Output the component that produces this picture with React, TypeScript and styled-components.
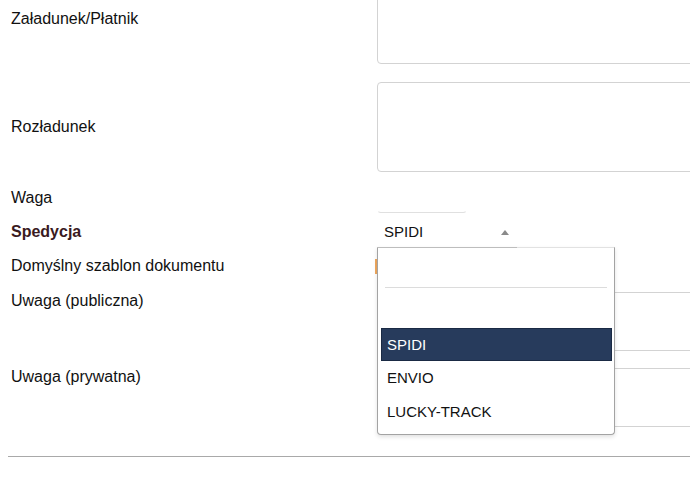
import styled, { createGlobalStyle } from 'styled-components';

const GlobalStyle = createGlobalStyle`
  html, body {
    margin: 0;
    padding: 0;
    background: #fff;
    overflow: hidden;
  }
  body {
    font-family: "Liberation Sans", Arial, sans-serif;
    color: #111;
  }
`;

// the form is scrolled a little, so the first textarea is cut at the top
const Page = styled.div`
  margin-top: -26px;
  padding-left: 8px;
`;

const Row = styled.div<{ $gap: number; $align?: 'center' | 'start' }>`
  display: grid;
  grid-template-columns: 369px 1fr;
  align-items: ${(p) => (p.$align === 'start' ? 'start' : 'center')};
  margin-top: ${(p) => p.$gap}px;
`;

const Label = styled.div<{ $strong?: boolean }>`
  padding-left: 3px;
  font-size: 16px;
  line-height: 18px;
  font-weight: ${(p) => (p.$strong ? 700 : 400)};
  color: ${(p) => (p.$strong ? '#3a1a1f' : '#111')};
`;

const TextArea = styled.textarea<{ $h: number }>`
  display: block;
  box-sizing: border-box;
  width: 340px;
  height: ${(p) => p.$h}px;
  margin: 0;
  border: 1px solid #d3d3d3;
  border-radius: 4px;
  resize: none;
  outline: none;
  font: inherit;
`;

const WeightInput = styled.input`
  display: block;
  box-sizing: border-box;
  width: 90px;
  height: 31px;
  margin: 0;
  border: 1px solid transparent;
  border-bottom-color: #e0e0e0;
  border-radius: 4px;
  outline: none;
  font: inherit;
`;

const SelectWrap = styled.div`
  position: relative;
  width: 140px;
`;

const SelectBox = styled.div`
  position: relative;
  z-index: 3;
  box-sizing: border-box;
  height: 32px;
  display: flex;
  align-items: center;
  justify-content: space-between;
  padding: 0 8px 0 7px;
  border-bottom: 1px solid #bdbdbd;
  font-size: 15px;
  color: #111;
`;

const Caret = styled.span`
  width: 0;
  height: 0;
  margin-top: 2px;
  border-left: 4px solid transparent;
  border-right: 4px solid transparent;
  border-bottom: 5px solid #8a8a8a;
`;

const Dropdown = styled.div`
  position: absolute;
  z-index: 2;
  top: calc(100% - 1px);
  left: 0;
  box-sizing: border-box;
  width: 238px;
  background: #fff;
  border: 1px solid #a3a3a3;
  border-top-color: #e2e2e2;
  border-radius: 0 0 4px 4px;
  box-shadow: 0 2px 4px rgba(0, 0, 0, 0.12);
`;

const SearchField = styled.div`
  height: 32px;
  margin: 7px 7px 0;
  border-bottom: 1px solid #dcdcdc;
`;

const OptionList = styled.ul`
  list-style: none;
  margin: 0;
  padding: 6px 2px 6px 3px;
`;

const Option = styled.li<{ $active?: boolean }>`
  box-sizing: border-box;
  height: 33.5px;
  display: flex;
  align-items: center;
  padding-left: 5px;
  font-size: 15px;
  border: 1px solid ${(p) => (p.$active ? '#1a2a44' : 'transparent')};
  background: ${(p) => (p.$active ? '#273b5c' : 'transparent')};
  color: ${(p) => (p.$active ? '#fff' : '#111')};
`;

// mostly hidden under the open dropdown, only its orange focus edge shows
const TemplateSelect = styled.div`
  display: flex;
  align-items: center;
  width: 120px;
  height: 32px;
  margin-left: -2px;

  &::before {
    content: '';
    width: 2px;
    height: 15px;
    background: #f0a85e;
  }
`;

const Divider = styled.div`
  height: 1px;
  margin-top: 29px;
  background: #a9a9a9;
`;

const carriers = ['', 'SPIDI', 'ENVIO', 'LUCKY-TRACK'];

export default function App() {
  const selected = 'SPIDI';

  return (
    <>
      <GlobalStyle />
      <Page>
        <Row $gap={0}>
          <Label>Załadunek/Płatnik</Label>
          <TextArea $h={90} />
        </Row>
        <Row $gap={18}>
          <Label>Rozładunek</Label>
          <TextArea $h={90} />
        </Row>
        <Row $gap={10}>
          <Label>Waga</Label>
          <WeightInput />
        </Row>
        <Row $gap={3}>
          <Label $strong>Spedycja</Label>
          <SelectWrap>
            <SelectBox>
              <span>{selected}</span>
              <Caret />
            </SelectBox>
            <Dropdown>
              <SearchField />
              <OptionList>
                {carriers.map((c) => (
                  <Option key={c || 'empty'} $active={c === selected}>
                    {c}
                  </Option>
                ))}
              </OptionList>
            </Dropdown>
          </SelectWrap>
        </Row>
        <Row $gap={2}>
          <Label>Domyślny szablon dokumentu</Label>
          <TemplateSelect />
        </Row>
        <Row $gap={10} $align="start">
          <Label>Uwaga (publiczna)</Label>
          <TextArea $h={59} />
        </Row>
        <Row $gap={17} $align="start">
          <Label>Uwaga (prywatna)</Label>
          <TextArea $h={59} />
        </Row>
        <Divider />
      </Page>
    </>
  );
}
